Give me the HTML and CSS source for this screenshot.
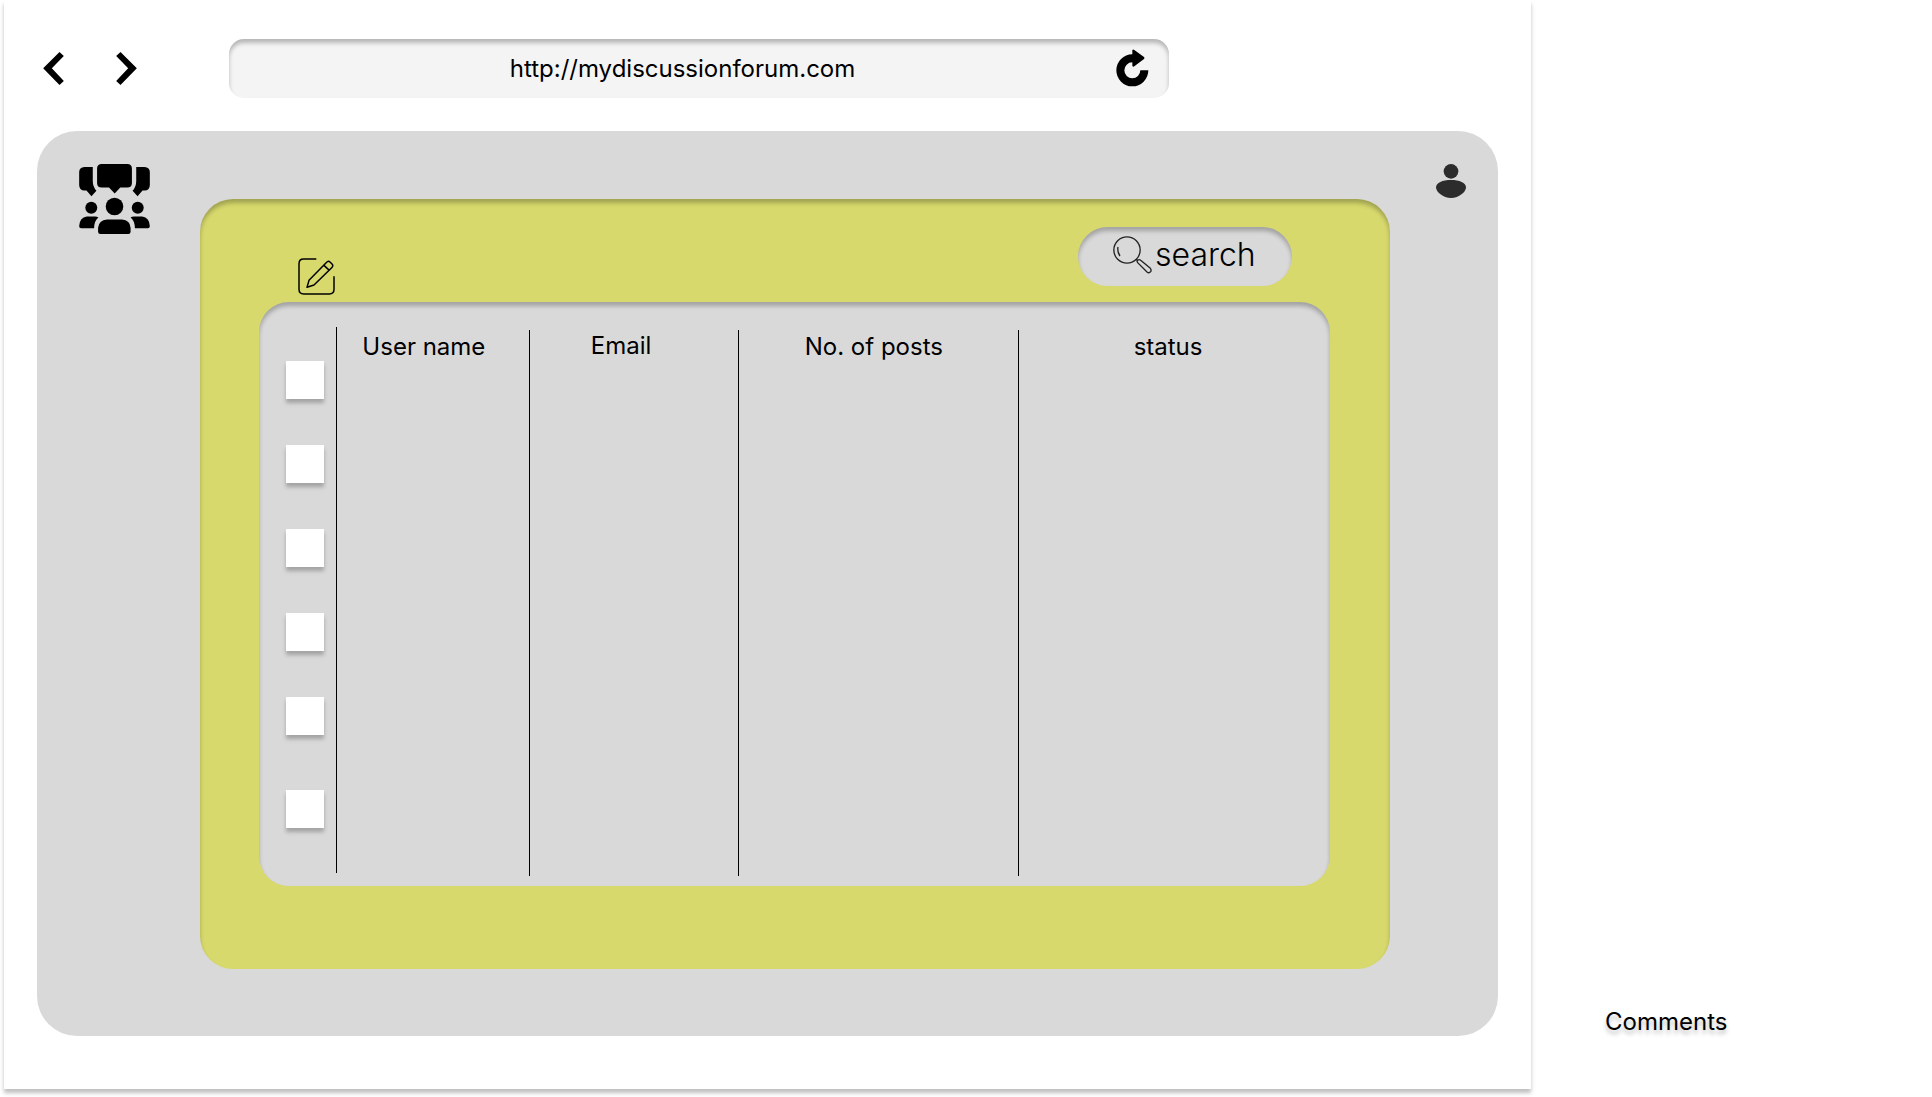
FILE: index.html
```html
<!DOCTYPE html>
<html lang="en">
<head>
<meta charset="utf-8">
<meta name="viewport" content="width=device-width, initial-scale=1">
<title>My Discussion Forum</title>
<link rel="stylesheet" href="styles.css">
</head>
<body>
<div class="page">
  <div class="browser">
    <header class="browser-bar">
      <nav class="history" aria-label="History">
        <button class="icon-button" type="button" aria-label="Back">
          <svg width="21" height="33" viewBox="0 0 62 99"><path d="M0 49 49 0 62 12 26 49 62 87 49 99Z"/></svg>
        </button>
        <button class="icon-button" type="button" aria-label="Forward">
          <svg width="21" height="33" viewBox="0 0 62 99"><path d="M62 49 13 0 0 12 36 49 0 87 13 99Z"/></svg>
        </button>
      </nav>
      <div class="address">
        <input class="address-input" type="text" value="http://mydiscussionforum.com" aria-label="Address">
        <button class="icon-button" type="button" aria-label="Reload">
          <svg width="33" height="38" viewBox="80 57 99 114"><path d="M129 60Q131 57 135 60L164 81Q167 84 164 87L135 109Q131 112 129 107V97A24 24 0 1 0 153 121H177A48 48 0 1 1 129 73Z"/></svg>
        </button>
      </div>
    </header>

    <main class="app">
      <a class="home" href="#" aria-label="Forum home">
        <svg width="71" height="70" viewBox="57 41 213 211">
          <path d="M73 50H98V92Q98 109 109 122L94 138 79 121H73Q57 120 57 104V66Q57 51 73 50Z"/>
          <path d="M254 50H229V92Q229 109 218 122L233 138 248 121H254Q270 120 270 104V66Q270 51 254 50Z"/>
          <path d="M125 41H202Q216 41 216 55V98Q216 112 202 112H181L164 130 147 112H125Q111 112 111 98V55Q111 41 125 41Z"/>
          <circle cx="93.500" cy="173" r="18"/>
          <circle cx="233.500" cy="173" r="18"/>
          <circle cx="163.500" cy="169" r="26.500"/>
          <path d="M80 199H105Q111 199 115 202Q102 212 102 235H63Q57 235 57 228Q58 202 80 199Z"/>
          <path d="M247 199H222Q216 199 212 202Q225 212 225 235H264Q270 235 270 228Q269 202 247 199Z"/>
          <path d="M141 208H186Q211 210 212 233V245Q212 252 205 252H121Q114 252 114 245V233Q116 210 141 208Z"/>
        </svg>
      </a>

      <section class="panel" aria-label="Users">
        <div class="toolbar">
          <button class="icon-button edit" type="button" aria-label="Edit">
            <svg width="37" height="37" viewBox="0 0 111 111" fill="none" stroke="#000" stroke-width="4.500" stroke-linejoin="round">
              <path d="M55 3H17Q3 3 3 17V94Q3 108 17 108H94Q108 108 108 94V55"/>
              <path d="M27 88 33 67 86 13Q91 7 96 12L102 18Q107 23 101 29L48 81ZM78 22 94 37"/>
            </svg>
          </button>
          <form class="search" role="search">
            <label class="search-icon" for="search" aria-label="Search users">
              <svg width="39" height="38" viewBox="219 347 117 114" fill="none" stroke="#222" stroke-width="4">
                <circle cx="261" cy="389" r="39.500"/>
                <path d="M234 380Q231 394 240 407"/>
                <path d="M288 417 294 422M293 427Q289 420 294 419Q298 416 302 420L331 444Q335 449 332 454Q327 460 321 455Z"/>
              </svg>
            </label>
            <input class="search-input" id="search" type="text" placeholder="search">
          </form>
        </div>

        <div class="users">
          <table class="user-table">
            <colgroup><col class="col-select"><col class="col-name"><col class="col-email"><col class="col-posts"><col class="col-status"></colgroup>
            <thead>
              <tr>
                <td class="select"></td>
                <th class="name" scope="col">User name</th>
                <th class="email" scope="col">Email</th>
                <th class="posts" scope="col">No. of posts</th>
                <th class="status" scope="col">status</th>
              </tr>
            </thead>
            <tbody>
              <tr><td class="select"><input class="check" type="checkbox" aria-label="Select user 1"></td><td></td><td></td><td></td><td></td></tr>
              <tr><td class="select"><input class="check" type="checkbox" aria-label="Select user 2"></td><td></td><td></td><td></td><td></td></tr>
              <tr><td class="select"><input class="check" type="checkbox" aria-label="Select user 3"></td><td></td><td></td><td></td><td></td></tr>
              <tr><td class="select"><input class="check" type="checkbox" aria-label="Select user 4"></td><td></td><td></td><td></td><td></td></tr>
              <tr class="tall"><td class="select"><input class="check" type="checkbox" aria-label="Select user 5"></td><td></td><td></td><td></td><td></td></tr>
              <tr><td class="select"><input class="check" type="checkbox" aria-label="Select user 6"></td><td></td><td></td><td></td><td></td></tr>
            </tbody>
          </table>
        </div>
      </section>

      <a class="profile" href="#" aria-label="Profile">
        <svg width="30" height="34" viewBox="0 0 90 102" fill="#2c2c2c">
          <circle cx="45" cy="22" r="22"/>
          <path d="M45 48C70 48 90 56 90 70C90 84 69 102 45 102S0 84 0 70C0 56 20 48 45 48Z"/>
        </svg>
      </a>
    </main>
  </div>

  <aside class="notes">
    <h2 class="notes-title">Comments</h2>
  </aside>
</div>
</body>
</html>
```
FILE: styles.css
```css
* {
  box-sizing: border-box;
}

body {
  margin: 0;
  background: #fff;
  color: #000;
  font-family: Inter, "Liberation Sans", sans-serif;
  font-size: 24px;
  line-height: 30px;
}

svg {
  display: block;
}

.page {
  display: flex;
  padding: 0 0 8px 4px;
}

.browser {
  flex: 1;
  min-width: 0;
  padding: 39px 33px 53px;
  background: #fff;
  box-shadow: 0 4px 4px rgba(0, 0, 0, 0.25);
}

.icon-button {
  flex: none;
  padding: 0;
  border: 0;
  background: none;
  cursor: pointer;
}

/* Browser bar */
.browser-bar {
  display: flex;
  align-items: center;
  margin-bottom: 33px;
}

.history {
  display: flex;
  gap: 52px;
  padding: 0 92px 0 6px;
}

.address {
  display: flex;
  flex: 1;
  align-items: center;
  height: 59px;
  margin-right: 329px;
  padding: 0 20px 2px;
  border-radius: 15px;
  background: #f4f4f4;
  box-shadow: inset 0 4px 4px rgba(0, 0, 0, 0.25);
}

.address-input {
  flex: 1;
  min-width: 0;
  padding: 2px 0 0;
  border: 0;
  background: none;
  color: inherit;
  font: inherit;
  text-align: center;
}

/* Forum */
.app {
  display: grid;
  grid-template-columns: 163px 1fr 108px;
  align-items: start;
  padding: 33px 0 67px;
  border-radius: 40px;
  background: #d9d9d9;
}

.home {
  padding-left: 42px;
}

.profile {
  padding-left: 46px;
}

.panel {
  margin-top: 35px;
  padding: 0 60px 83px 59px;
  border-radius: 33px;
  background: #d7d96c;
  box-shadow: inset 0 4px 4px rgba(0, 0, 0, 0.25);
}

.toolbar {
  display: flex;
  align-items: flex-end;
  justify-content: space-between;
  padding: 28px 38px 7px 39px;
}

.search {
  display: flex;
  align-items: center;
  width: 214px;
  height: 59px;
  margin-bottom: 9px;
  padding: 0 24px 4px 35px;
  border-radius: 30px;
  background: #d9d9d9;
  box-shadow: inset 0 4px 4px rgba(0, 0, 0, 0.25);
}

.search-icon {
  flex: none;
}

.search-input {
  flex: 1;
  min-width: 0;
  margin-left: 3px;
  padding: 0;
  border: 0;
  background: none;
  color: inherit;
  font: inherit;
  font-size: 32px;
  font-weight: 300;
  line-height: 40px;
}

.search-input::placeholder {
  color: #000;
  opacity: 1;
}

/* User table */
.users {
  padding: 25px 0 10px;
  border-radius: 30px;
  background: #d9d9d9;
  box-shadow: inset 0 4px 4px rgba(0, 0, 0, 0.25);
}

.user-table {
  width: 100%;
  border-collapse: collapse;
  table-layout: fixed;
}

.col-select {
  width: 78px;
}

.col-name {
  width: 17.9%;
}

.col-email {
  width: 19.5%;
}

.col-posts {
  width: 26.2%;
}

.user-table th,
.user-table td {
  height: 84px;
  padding: 0;
  background: linear-gradient(#000, #000) no-repeat left top / 1px 100%;
  vertical-align: top;
}

.user-table thead th,
.user-table thead td {
  height: 34px;
  padding-top: 5px;
  background-position: left 3px;
  font-weight: 400;
  line-height: 29px;
}

.user-table .tall td {
  height: 93px;
}

.user-table th.name,
.user-table td:nth-child(2) {
  background: none;
}

.user-table td.select {
  padding-left: 27px;
  background-position: right top;
}

.user-table tr:last-child td {
  height: 86px;
}

.user-table tbody tr:last-child td.select {
  background-size: 1px calc(100% - 3px);
}

.user-table thead tr:last-child td.select {
  height: 34px;
}

.user-table .name {
  padding-right: 18px;
}

.user-table .email {
  padding-top: 4px;
  padding-right: 24px;
}

.user-table .posts {
  padding-right: 8px;
}

.user-table .status {
  padding-right: 12px;
}

.check {
  display: block;
  width: 38px;
  height: 38px;
  margin: 0;
  appearance: none;
  background: #fff;
  box-shadow: 0 4px 4px rgba(0, 0, 0, 0.25);
}

.check:checked {
  background: #2c2c2c;
}

/* Notes beside the browser */
.notes {
  display: flex;
  flex: none;
  align-items: flex-end;
  width: 401px;
  padding: 0 0 52px 74px;
}

.notes-title {
  margin: 0;
  font-size: 24px;
  font-weight: 400;
  text-shadow: 0 4px 4px rgba(0, 0, 0, 0.25);
}
```
